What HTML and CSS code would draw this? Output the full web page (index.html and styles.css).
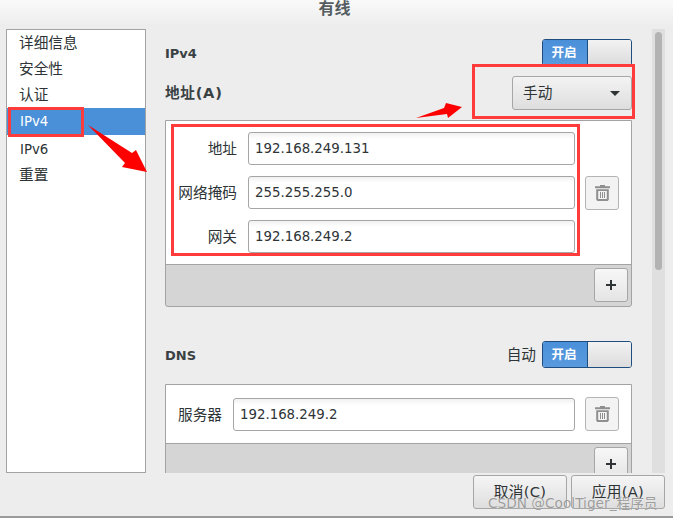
FILE: index.html
```html
<!DOCTYPE html>
<html lang="zh">
<head>
<meta charset="utf-8">
<title>有线</title>
<link rel="stylesheet" href="styles.css">
</head>
<body>
<div class="window">
  <header class="titlebar">有线</header>
  <div class="main">
    <ul class="sidebar">
      <li>详细信息</li>
      <li>安全性</li>
      <li>认证</li>
      <li class="selected latin">IPv4</li>
      <li class="latin">IPv6</li>
      <li>重置</li>
    </ul>
    <div class="content">
      <div class="row row-first">
        <span class="heading">IPv4</span>
        <div class="switch"><span class="switch-on">开启</span><span class="switch-off"></span></div>
      </div>
      <div class="row row-second">
        <span class="heading heading-large">地址(A)</span>
        <div class="combo"><span>手动</span><i class="caret"></i></div>
      </div>
      <section class="box box-address">
        <div class="box-body">
          <div class="form">
            <div class="field-row"><label class="label label-wide">地址</label><div class="entry">192.168.249.131</div></div>
            <div class="field-row"><label class="label label-wide">网络掩码</label><div class="entry">255.255.255.0</div></div>
            <div class="field-row"><label class="label label-wide">网关</label><div class="entry">192.168.249.2</div></div>
          </div>
          <button class="icon-btn trash">
            <svg width="15" height="16" viewBox="0 0 15 16"><path d="M5 1.2V0h5v1.2h5v2H0v-2z" fill="#8f8f8f"/><path d="M1.2 4.2h12.6v10.6L12.6 16H2.4l-1.2-1.2zM3.2 6v8h8.6V6zM5 7h1v6H5zm2 0h1v6H7zm2 0h1v6H9z" fill="#8f8f8f" fill-rule="evenodd"/></svg>
          </button>
        </div>
        <div class="box-bar"><button class="icon-btn plus"><svg width="12" height="12" viewBox="0 0 12 12"><path d="M5 1h2v4h4v2H7v4H5V7H1V5h4z" fill="#2e3436"/></svg></button></div>
      </section>
      <div class="row row-dns">
        <span class="heading">DNS</span>
        <div class="switch-group">
          <span class="auto">自动</span>
          <div class="switch"><span class="switch-on">开启</span><span class="switch-off"></span></div>
        </div>
      </div>
      <section class="box box-dns">
        <div class="box-body box-body-dns">
          <div class="field-row field-row-dns"><label class="label">服务器</label><div class="entry">192.168.249.2</div></div>
          <button class="icon-btn trash">
            <svg width="15" height="16" viewBox="0 0 15 16"><path d="M5 1.2V0h5v1.2h5v2H0v-2z" fill="#8f8f8f"/><path d="M1.2 4.2h12.6v10.6L12.6 16H2.4l-1.2-1.2zM3.2 6v8h8.6V6zM5 7h1v6H5zm2 0h1v6H7zm2 0h1v6H9z" fill="#8f8f8f" fill-rule="evenodd"/></svg>
          </button>
        </div>
        <div class="box-bar"><button class="icon-btn plus"><svg width="12" height="12" viewBox="0 0 12 12"><path d="M5 1h2v4h4v2H7v4H5V7H1V5h4z" fill="#2e3436"/></svg></button></div>
      </section>
    </div>
    <div class="scrollbar"><div class="thumb"></div></div>
  </div>
  <footer class="actions">
    <button class="action">取消(C)</button>
    <button class="action">应用(A)</button>
  </footer>
</div>
<div class="mark mark-tab"></div>
<div class="mark mark-combo"></div>
<div class="mark mark-form"></div>
<svg class="arrows" width="673" height="520" viewBox="0 0 673 520">
  <polygon points="88,125 132,153 136,150 147,172 122,167 125,163" fill="#ff0000"/>
  <polygon points="416,118 444,108 446,103 462,107 448,118 447,114" fill="#ff0000"/>
</svg>
<div class="watermark">CSDN @CoolTiger_程序员</div>
</body>
</html>
```

FILE: styles.css
```css
* { box-sizing: border-box; }
html, body { margin: 0; padding: 0; background: #fff; }
body {
  position: relative;
  width: 673px;
  height: 520px;
  overflow: hidden;
  font-family: "DejaVu Sans", "Noto Sans CJK SC", sans-serif;
  font-size: 14.67px;
  color: #2e3436;
}
.window {
  height: 518px;
  background: #ededed;
  border-bottom: 2px solid #9b9b9b;
  display: flex;
  flex-direction: column;
}
.titlebar {
  height: 29px;
  flex: none;
  padding-right: 4px;
  line-height: 18px;
  text-align: center;
  font-size: 16px;
  font-weight: 700;
  color: #555d61;
  background: linear-gradient(#fafafa, #ededed 26px);
}
.main {
  height: 444px;
  flex: none;
  display: flex;
  padding-left: 6px;
  padding-right: 8px;
}
.sidebar {
  width: 140px;
  flex: none;
  margin: 0;
  padding: 0;
  list-style: none;
  background: #fff;
  border: 1px solid #a3a3a3;
  color: #2e3436;
}
.sidebar li {
  height: 26px;
  line-height: 25px;
  padding-left: 12px;
  white-space: nowrap;
}
.sidebar .latin { font-size: 13.33px; padding-left: 13px; line-height: 27px; }
.sidebar .selected {
  height: 27px;
  margin-bottom: 1px;
  line-height: 28px;
  background: #4a90d9;
  color: #fff;
}
.content {
  width: 467px;
  flex: none;
  margin-left: 19px;
  overflow: hidden;
}
.row { display: flex; align-items: center; justify-content: space-between; }
.row-first { margin-top: 10px; height: 27px; }
.row-second { margin-top: 10px; height: 34px; }
.row-dns { margin-top: 34px; height: 27px; }
.heading { font-weight: 700; font-size: 13px; color: #3a4144; padding-top: 2px; }
.heading-large { font-size: 14.67px; padding-top: 0; padding-bottom: 4px; letter-spacing: 0.7px; }
.switch-group { display: flex; align-items: center; gap: 6px; }
.auto { color: #2e3436; padding-bottom: 2px; }
.switch {
  width: 90px;
  height: 27px;
  display: flex;
  border: 1px solid #1f4d80;
  border-radius: 3px;
  overflow: hidden;
}
.switch-on {
  width: 45px;
  padding-right: 2px;
  background: linear-gradient(#4a90d9, #5a9ade);
  border-right: 1px solid #1f4d80;
  color: #fff;
  font-size: 12.5px;
  font-weight: 700;
  text-align: center;
  line-height: 26px;
}
.switch-off { flex: 1; background: linear-gradient(#f2f2f2, #dcdcdc); }
.combo {
  width: 120px;
  height: 34px;
  display: flex;
  align-items: center;
  justify-content: space-between;
  padding: 0 11px 4px 10px;
  border: 1px solid #a6a6a6;
  border-radius: 3px;
  background: linear-gradient(#f3f3f3, #dedede);
}
.caret {
  display: block;
  width: 0;
  height: 0;
  margin-top: 4px;
  border-left: 5px solid transparent;
  border-right: 5px solid transparent;
  border-top: 5px solid #2e3436;
}
.box {
  border: 1px solid #a3a3a3;
  border-radius: 0 0 3px 3px;
  background: #d5d5d5;
}
.box-address { margin-top: 10px; height: 187px; }
.box-dns { margin-top: 16px; }
.box-body {
  display: flex;
  align-items: center;
  background: #fff;
  border-bottom: 1px solid #a3a3a3;
  padding: 12px;
  gap: 10px;
}
.box-address .box-body { height: 144px; }
.box-body-dns { height: 59px; }
.form { flex: 1; display: flex; flex-direction: column; gap: 11px; }
.field-row { display: flex; align-items: center; gap: 11px; }
.field-row-dns { flex: 1; }
.label { flex: none; white-space: nowrap; color: #2e3436; padding-bottom: 2px; }
.label-wide { width: 59px; text-align: right; }
.entry {
  flex: 1;
  height: 33px;
  line-height: 32px;
  padding-left: 6px;
  font-size: 13.33px;
  border: 1px solid #a6a6a6;
  border-radius: 3px;
  background: linear-gradient(#f1f1f1, #fff 6px);
  color: #2e3436;
}
.box-body .icon-btn { flex: none; }
.icon-btn {
  width: 34px;
  height: 34px;
  padding: 0;
  display: flex;
  align-items: center;
  justify-content: center;
  border: 1px solid #b4b4b4;
  border-radius: 3px;
  background: #f3f3f3;
}
.box-bar {
  display: flex;
  justify-content: flex-end;
  padding: 3px 3px 0 0;
}
.plus { background: linear-gradient(#f7f7f7, #e4e4e4); border-color: #a6a6a6; }
.scrollbar {
  width: 13px;
  flex: none;
  margin-left: 20px;
  background: #dfdfdf;
  padding: 3px;
}
.thumb { height: 238px; border-radius: 4px; background: #b3b3b3; }
.actions {
  display: flex;
  justify-content: flex-end;
  gap: 4px;
  padding: 2px 8px 0 0;
}
.action {
  width: 94px;
  height: 34px;
  padding: 0 0 3px;
  font: inherit;
  letter-spacing: 0.3px;
  color: #2e3436;
  border: 1px solid #a6a6a6;
  border-radius: 3px;
  background: linear-gradient(#f5f5f5, #dedede);
}
.mark {
  position: absolute;
  border: 3px solid #ff3b3b;
}
.mark-tab { left: 8px; top: 107px; width: 76px; height: 30px; }
.mark-combo { left: 472px; top: 64px; width: 163px; height: 55px; }
.mark-form { left: 171px; top: 124px; width: 409px; height: 132px; }
.arrows { position: absolute; left: 0; top: 0; pointer-events: none; }
.watermark {
  position: absolute;
  left: 488px;
  top: 492px;
  font-size: 13.7px;
  white-space: nowrap;
  color: rgba(120, 120, 120, 0.7);
  text-shadow: 0 0 1px rgba(255, 255, 255, 0.6);
}
```
